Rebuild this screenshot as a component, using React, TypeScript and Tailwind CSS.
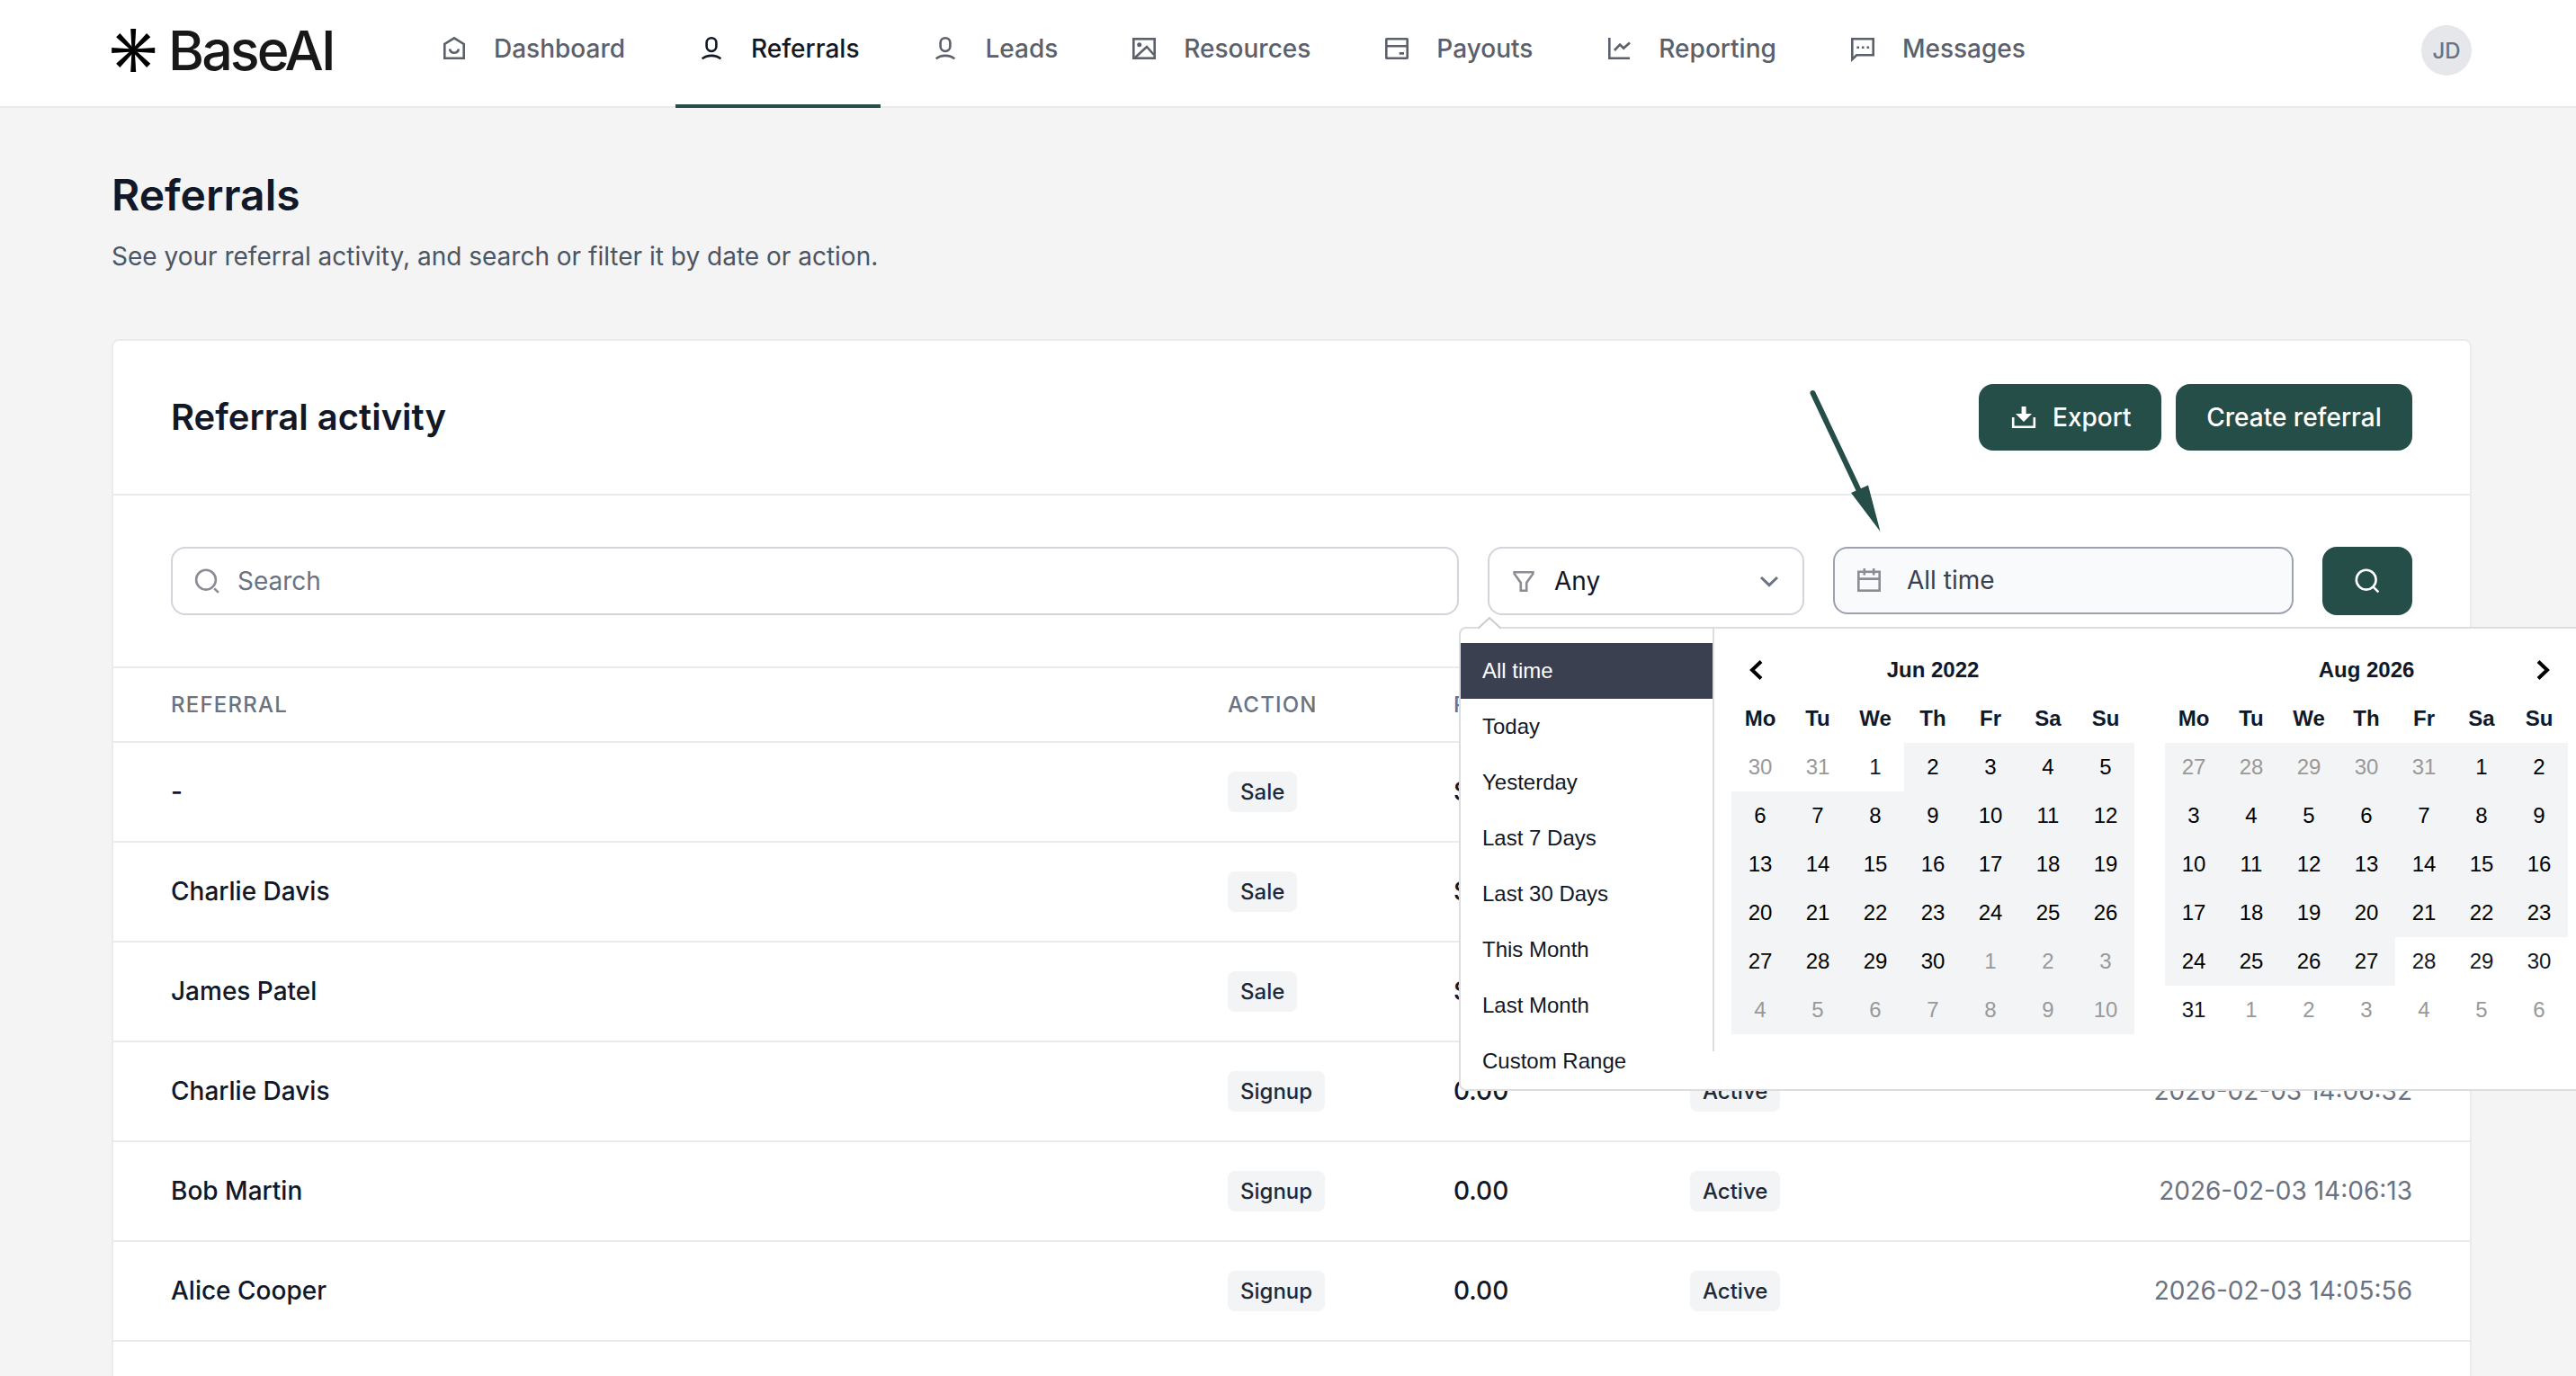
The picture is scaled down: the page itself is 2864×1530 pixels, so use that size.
import React from 'react'
import clsx from 'clsx'

type IconProps = { className?: string }

const Icon = ({ className, children }: IconProps & { children: React.ReactNode }) => (
    <svg viewBox="0 0 32 32" fill="none" stroke="currentColor" strokeWidth="2.6" className={clsx('size-8 shrink-0', className)}>
        {children}
    </svg>
)

const HomeIcon = () => (
    <Icon>
        <path d="M5.3 26.7V11L16 4.3 26.7 11v15.7z" />
        <path d="M11 16.6c1 5.6 9 5.6 10 0" />
    </Icon>
)

const UserIcon = () => (
    <Icon>
        <rect x="10.6" y="4.2" width="10.8" height="14.8" rx="5.4" />
        <path d="M5.7 27.4c5.3-4.7 15.3-4.7 20.6 0" />
    </Icon>
)

const ImageIcon = () => (
    <Icon>
        <rect x="4.3" y="5.3" width="23.4" height="21.4" />
        <path d="M6 26l13-12 8 9" />
        <circle cx="10.7" cy="11.8" r="2.5" fill="currentColor" stroke="none" />
    </Icon>
)

const CardIcon = () => (
    <Icon>
        <rect x="4.3" y="5.3" width="23.4" height="21.4" rx="0.5" />
        <path d="M4.3 13.2h23.4M18.7 21.4H24" />
    </Icon>
)

const ChartIcon = () => (
    <Icon>
        <path d="M5.3 4v22.7H28" />
        <path d="M10.9 18l6.2-6.4 4 4L28 9.6" />
    </Icon>
)

const ChatIcon = () => (
    <Icon>
        <path d="M4.3 28V5.3h23.4v18H9.2z" />
        <path d="M9.4 14.7H12M14.9 14.7h2.6M20.5 14.7h2.6" />
    </Icon>
)

const navItems = [
    { label: 'Dashboard', icon: HomeIcon },
    { label: 'Referrals', icon: UserIcon, active: true },
    { label: 'Leads', icon: UserIcon },
    { label: 'Resources', icon: ImageIcon },
    { label: 'Payouts', icon: CardIcon },
    { label: 'Reporting', icon: ChartIcon },
    { label: 'Messages', icon: ChatIcon },
]

type Row = { name: string; action?: string; amount?: string; status?: string; date?: string }

const rows: Row[] = [
    { name: '-', action: 'Sale', amount: '$' },
    { name: 'Charlie Davis', action: 'Sale', amount: '$' },
    { name: 'James Patel', action: 'Sale', amount: '$' },
    { name: 'Charlie Davis', action: 'Signup', amount: '0.00', status: 'Active', date: '2026-02-03 14:06:32' },
    { name: 'Bob Martin', action: 'Signup', amount: '0.00', status: 'Active', date: '2026-02-03 14:06:13' },
    { name: 'Alice Cooper', action: 'Signup', amount: '0.00', status: 'Active', date: '2026-02-03 14:05:56' },
]

const ranges = ['All time', 'Today', 'Yesterday', 'Last 7 Days', 'Last 30 Days', 'This Month', 'Last Month', 'Custom Range']
const weekdays = ['Mo', 'Tu', 'We', 'Th', 'Fr', 'Sa', 'Su']

type MonthProps = {
    title: string
    // number of leading days from the previous month, and its last day
    lead: number
    prevLast: number
    days: number
    rangeStart: number
    rangeEnd: number
}

const Month = ({ title, lead, prevLast, days, rangeStart, rangeEnd }: MonthProps) => (
    <div className="w-[448px] text-2xl text-[#111827]">
        <div className="flex h-[54px] items-center justify-center font-bold">{title}</div>
        <div className="grid grid-cols-7">
            {weekdays.map((day) => (
                <div key={day} className="flex h-[54px] items-center justify-center font-bold">{day}</div>
            ))}
            {Array.from({ length: 42 }, (_, i) => {
                const n = i - lead + 1
                const off = n < 1 || n > days
                const label = n < 1 ? prevLast + n : n > days ? n - days : n
                const inRange = i >= rangeStart && i <= rangeEnd
                return (
                    <div
                        key={i}
                        className={clsx(
                            'flex h-[54px] items-center justify-center',
                            inRange && 'bg-[#f3f4f6]',
                            off ? 'text-[#999999]' : inRange ? 'text-black' : 'text-[#111827]'
                        )}
                    >
                        {label}
                    </div>
                )
            })}
        </div>
    </div>
)

const DatePicker = () => (
    <div className="absolute top-[89px] left-[1432px] z-10 flex h-[516px] w-[1300px] rounded-lg border-2 border-[#dddddd] bg-white font-['Liberation_Sans',Arial,sans-serif]">
        <svg className="absolute -top-[14px] left-[17px] h-4 w-8" viewBox="0 0 32 16">
            <path d="M2 16L15 2l13 14z" fill="#fff" />
            <path d="M2.5 13.5L15 2l12.5 11.5" fill="none" stroke="#cccccc" strokeWidth="2" />
        </svg>
        <div className="w-[280px] pt-4">
            {ranges.map((range, i) => (
                <div key={range} className={clsx('flex h-[62px] items-center pl-6 text-2xl', i === 0 ? 'bg-[#3b4050] text-white' : 'text-[#111827]')}>
                    {range}
                </div>
            ))}
        </div>
        <div className="flex h-[470px] gap-[34px] border-l-2 border-[#dddddd] pt-[19px] pl-[19px]">
            <div className="relative">
                <svg className="absolute top-[15px] left-[19px] h-6 w-4" viewBox="0 0 16 24" fill="none" stroke="#000" strokeWidth="4">
                    <path d="M14 2.5L4 12l10 9.5" />
                </svg>
                <Month title="Jun 2022" lead={2} prevLast={31} days={30} rangeStart={3} rangeEnd={41} />
            </div>
            <div className="relative">
                <svg className="absolute top-[15px] right-[19px] h-6 w-4" viewBox="0 0 16 24" fill="none" stroke="#000" strokeWidth="4">
                    <path d="M2 2.5L12 12 2 21.5" />
                </svg>
                <Month title="Aug 2026" lead={5} prevLast={31} days={31} rangeStart={0} rangeEnd={31} />
            </div>
        </div>
    </div>
)

const Badge = ({ children }: { children: React.ReactNode }) => (
    <span className="flex h-[45px] w-fit items-center rounded-lg bg-[#f3f4f6] px-[14px] text-2xl font-medium text-[#1f2937]">{children}</span>
)

const App = () => {
    return (
        <div className="relative h-[1530px] w-[2864px] overflow-hidden bg-[#f4f4f4] font-['Inter',sans-serif] text-[28px] text-[#111827] antialiased">
            <header className="flex h-[120px] border-b-2 border-[#ebebef] bg-white pr-[116px] pl-[124px]">
                <div className="flex w-[341px] pt-[30px]">
                    <svg viewBox="0 0 49 48" className="mt-0.5 h-12 w-[49px] shrink-0" fill="#000">
                        {[0, 45, 90, 135, 180, 225, 270, 315].map((angle) => (
                            <path key={angle} d="M21.2 0h6l-1.4 24h-3.2z" transform={`rotate(${angle} 24.2 24)`} />
                        ))}
                    </svg>
                    <span className="ml-[14px] text-[61px] leading-[53px] font-medium tracking-[-0.048em] text-[#181818]">BaseAI</span>
                </div>
                <nav className="flex gap-8">
                    {navItems.map(({ label, icon: NavIcon, active }) => (
                        <a
                            key={label}
                            className={clsx(
                                'flex h-[120px] items-center gap-7 border-b-4 px-6 pb-2 font-medium',
                                active ? 'border-[#264e49] text-[#111827]' : 'border-transparent text-[#5b606b]'
                            )}
                        >
                            <NavIcon />
                            {label}
                        </a>
                    ))}
                </nav>
                <div className="mt-7 ml-auto flex size-14 items-center justify-center rounded-full bg-[#e5e7eb] pt-0.5 text-2xl font-medium text-[#6b7280]">JD</div>
            </header>

            <main className="pt-[65px] pr-[116px] pl-[124px]">
                <h1 className="text-[48px] leading-[64px] font-semibold">Referrals</h1>
                <p className="mt-4 leading-10 text-[#4b5563]">See your referral activity, and search or filter it by date or action.</p>

                <section className="mt-[72px] h-[1200px] rounded-lg border-2 border-[#ebebef] bg-white">
                    <div className="flex h-[172px] items-center justify-between border-b-2 border-[#ebebef] px-16">
                        <h2 className="text-[40px] font-semibold">Referral activity</h2>
                        <div className="flex gap-4 font-medium text-white">
                            <button className="flex h-[74px] w-[203px] items-center rounded-2xl bg-[#264e49] pl-[34px]">
                                <svg viewBox="0 0 32 32" className="size-8" fill="currentColor">
                                    <path d="M13.6 4h5v8h6.4L16 21 7 12h6.6z" />
                                    <path d="M4.2 16v10.7h23.6V16" fill="none" stroke="currentColor" strokeWidth="2.6" />
                                </svg>
                                <span className="ml-4">Export</span>
                            </button>
                            <button className="h-[74px] w-[263px] rounded-2xl bg-[#264e49]">Create referral</button>
                        </div>
                    </div>

                    <div className="flex h-[192px] border-b-2 border-[#ebebef] px-16 pt-[57px]">
                        <div className="relative flex h-[76px] gap-8">
                            <div className="flex w-[1432px] items-center rounded-2xl border-2 border-[#d1d5db] pl-[22px] text-[#6b7280]">
                                <Icon className="text-[#8b8c94]">
                                    <circle cx="15" cy="14.7" r="10.9" />
                                    <path d="M24.3 24.3l4.6 4.6" />
                                </Icon>
                                <span className="ml-[18px]">Search</span>
                            </div>
                            <div className="flex w-[352px] items-center rounded-2xl border-2 border-[#d1d5db] pr-[21px] pl-[22px]">
                                <Icon className="text-[#8b8c94]">
                                    <path d="M5.6 6.3h20.8v1.6L19.2 18v8.8h-6.4V18L5.6 7.9z" />
                                </Icon>
                                <span className="ml-[18px]">Any</span>
                                <Icon className="ml-auto text-[#6b7280]">
                                    <path d="M7 12l9 8.6 9-8.6" strokeWidth="3" />
                                </Icon>
                            </div>
                            <div className="flex h-[75px] w-[512px] items-center rounded-2xl border-2 border-[#9ca3af] bg-[#f9fafb] pl-[22px] text-[#374151]">
                                <Icon className="text-[#8b8c94]">
                                    <rect x="4.3" y="5.8" width="23.4" height="20.9" />
                                    <path d="M4.3 13.6h23.4M10.8 2v7.5M21.2 2v7.5" />
                                </Icon>
                                <span className="ml-[26px] pb-0.5">All time</span>
                            </div>
                            <button className="flex w-[100px] items-center justify-center rounded-2xl bg-[#264e49] text-white">
                                <Icon>
                                    <circle cx="14.7" cy="14.7" r="10.9" />
                                    <path d="M22.4 22.4l6 6" />
                                </Icon>
                            </button>
                            <DatePicker />
                            {/* pointer towards the date field */}
                            <svg className="absolute -top-[180px] left-[1810px] h-[170px] w-[100px]" viewBox="0 0 100 170" fill="#264e49">
                                <path d="M15.5 9l52 110" stroke="#264e49" strokeWidth="6" strokeLinecap="round" />
                                <path d="M58 120l9-4 10-4.500 13.500 51.500z" />
                            </svg>
                        </div>
                    </div>

                    <div className="grid h-[83px] grid-cols-[1175px_251px_263px_1fr] items-center border-b-2 border-[#ebebef] px-16 text-2xl font-medium tracking-[0.05em] text-[#6b7280]">
                        <span>REFERRAL</span>
                        <span>ACTION</span>
                        <span>P</span>
                    </div>
                    {rows.map((row, i) => (
                        <div key={i} className="grid h-[111px] grid-cols-[1175px_251px_263px_1fr_auto] items-center border-b-2 border-[#ebebef] px-16">
                            <span className="pb-px font-medium">{row.name}</span>
                            <Badge>{row.action}</Badge>
                            <span className="pb-px font-medium">{row.amount}</span>
                            {row.status && <Badge>{row.status}</Badge>}
                            <span className="pb-px text-[#6b7280]">{row.date}</span>
                        </div>
                    ))}
                </section>
            </main>
        </div>
    )
}

export default App
